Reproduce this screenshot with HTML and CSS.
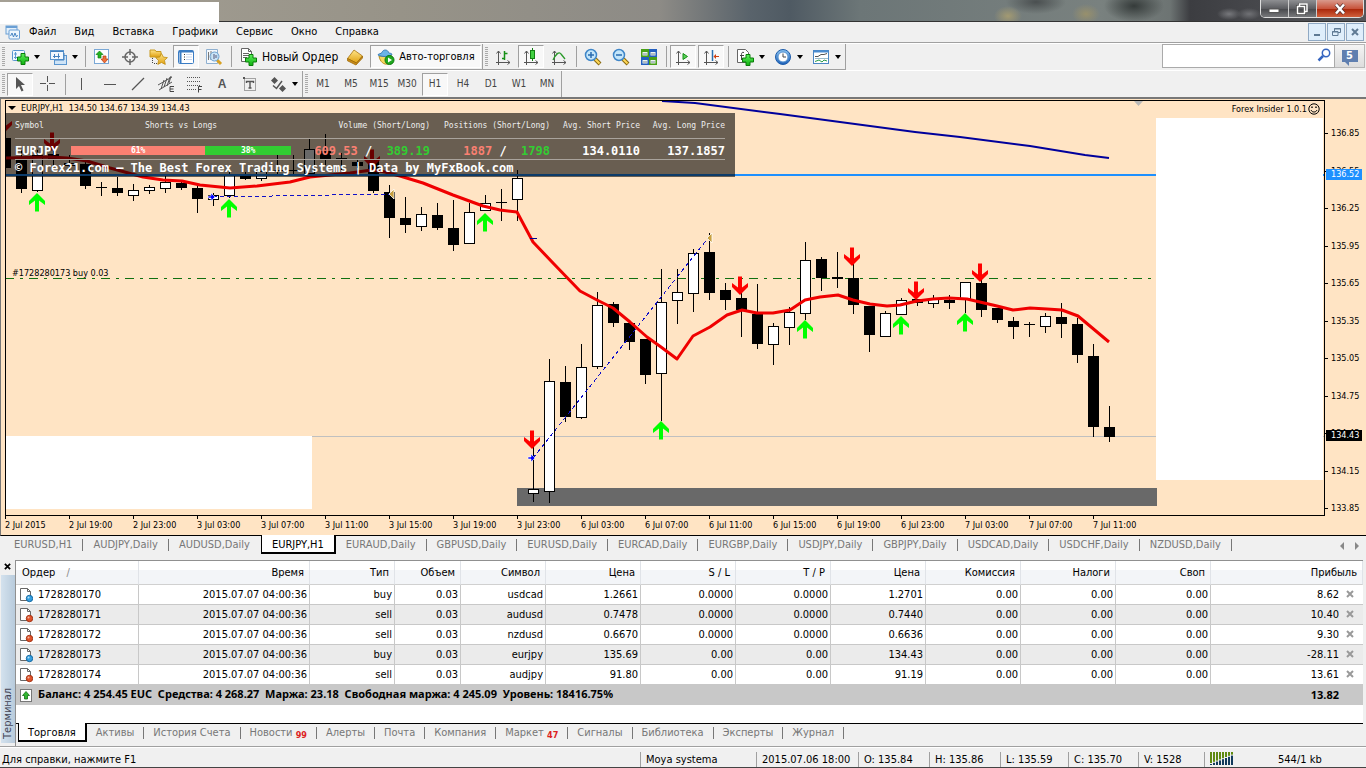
FILE: index.html
```html
<!DOCTYPE html>
<html lang="ru">
<head>
<meta charset="utf-8">
<title>EURJPY,H1</title>
<link rel="stylesheet" href="styles.css">
</head>
<body>
<svg class="defs" aria-hidden="true">
  <defs>
    <linearGradient id="plusFill" x1="0" y1="0" x2="0" y2="1"><stop offset="0" stop-color="#5cf05c"/><stop offset="1" stop-color="#10b010"/></linearGradient>
    <linearGradient id="goldFill" x1="0" y1="0" x2="0" y2="1"><stop offset="0" stop-color="#ffe68a"/><stop offset="1" stop-color="#e0a010"/></linearGradient>
    <linearGradient id="blueFill" x1="0" y1="0" x2="0" y2="1"><stop offset="0" stop-color="#8cc4f0"/><stop offset="1" stop-color="#1c60b8"/></linearGradient>
    <symbol id="plus" viewBox="0 0 12 12"><path d="M4 .5h4V4h3.500v4H8v3.500H4V8H.5V4H4z" fill="url(#plusFill)" stroke="#0a7d0a"/></symbol>
    <symbol id="axes" viewBox="0 0 18 18"><path d="M4.500 3v14M2 14.500h14M2.500 5.500l2-2.500 2 2.500M13.500 12.500l2.500 2-2.500 2" fill="none" stroke="#555"/></symbol>
    <symbol id="lens" viewBox="0 0 18 18"><path d="M11 11l5 5" stroke="#8a6a10" stroke-width="4"/><path d="M11 11l4.500 4.500" stroke="#ffd95a" stroke-width="2"/><circle cx="7" cy="7" r="5.500" fill="#c4e6fa" stroke="#3f86c8" stroke-width="1.500"/></symbol>
    <symbol id="doc" viewBox="0 0 14 16"><path d="M1.500 1.500h7l3 3v9h-10z" fill="#fff" stroke="#666"/><path d="M8.500 1.500v3h3" fill="none" stroke="#666"/></symbol>
    <symbol id="order-blue" viewBox="0 0 14 16"><use href="#doc"/><circle cx="10.500" cy="11.500" r="3.200" fill="#35a0e0" stroke="#1467a0"/><circle cx="9.500" cy="10.500" r="1" fill="#b5e2fa"/></symbol>
    <symbol id="order-red" viewBox="0 0 14 16"><use href="#doc"/><circle cx="10.500" cy="11.500" r="3.200" fill="#e0532a" stroke="#a33010"/><circle cx="9.500" cy="10.500" r="1" fill="#f8b8a0"/></symbol>
    <symbol id="cross" viewBox="0 0 8 8"><path d="M1 1l6 6M7 1L1 7" stroke="currentColor" stroke-width="2"/></symbol>
  </defs>
</svg>

<div class="app">
  <header class="titlebar">
    <div class="title-blank"></div>
    <div class="win-controls">
      <button class="win-btn" aria-label="Свернуть"><svg width="12" height="12" viewBox="0 0 12 12"><rect x="1" y="6" width="10" height="3.500" fill="#fff" stroke="#555"/></svg></button>
      <button class="win-btn" aria-label="Восстановить"><svg width="12" height="12" viewBox="0 0 12 12"><path d="M3.500 3V1h7.500v7.500H9M1.500 3.500h7v7h-7z" fill="none" stroke="#444" stroke-width="3"/><path d="M3.500 3V1h7.500v7.500H9M1.500 3.500h7v7h-7z" fill="none" stroke="#fff" stroke-width="1.500"/></svg></button>
      <button class="win-btn win-close" aria-label="Закрыть"><svg width="12" height="12" viewBox="0 0 12 12"><path d="M2 1.500l8 9M10 1.500l-8 9" stroke="#533" stroke-width="4"/><path d="M2 1.500l8 9M10 1.500l-8 9" stroke="#fff" stroke-width="2.500"/></svg></button>
    </div>
  </header>

  <nav class="menubar">
    <svg class="app-icon" width="15" height="15" viewBox="0 0 15 15"><rect x="1" y="1" width="11" height="8" fill="#e4f0fb" stroke="#6a9fd4"/><path d="M1 2h11" stroke="#6a9fd4" stroke-width="2"/><rect x="4" y="5" width="10.500" height="9" rx="1" fill="#eef6fd" stroke="#6a9fd4"/><path d="M5.500 11l1.500-3 1.500 4 1.500-4 1.500 4 1-2" fill="none" stroke="#4a86c4"/></svg>
    <button class="menu-item">Файл</button><button class="menu-item">Вид</button><button class="menu-item">Вставка</button><button class="menu-item">Графики</button><button class="menu-item">Сервис</button><button class="menu-item">Окно</button><button class="menu-item">Справка</button>
    <div class="mdi">
      <button class="mdi-btn" aria-label="Свернуть график"><svg width="10" height="10" viewBox="0 0 10 10"><path d="M2 8h6" stroke="#5f7a94" stroke-width="2"/></svg></button>
      <button class="mdi-btn" aria-label="Восстановить график"><svg width="10" height="10" viewBox="0 0 10 10"><path d="M3.500 4V1.500h6v4H7M1.500 4.500h5.500v4H1.500zM3 2h6.500M1 5h6" fill="none" stroke="#5f7a94"/></svg></button>
      <button class="mdi-btn" aria-label="Закрыть график"><svg width="10" height="10" viewBox="0 0 10 10"><path d="M2 2l6 6M8 2L2 8" stroke="#5f7a94" stroke-width="2"/></svg></button>
    </div>
  </nav>

  <div class="toolbar-row">
    <div class="toolbar">
      <span class="grip"></span>
      <button class="tool drop" aria-label="Новый график"><svg width="19" height="18" viewBox="0 0 19 18"><rect x="1.500" y="2.500" width="12" height="10" rx="1" fill="#f2f8fe" stroke="#5b96cf"/><path d="M4.500 4v7M3 9.500h8M3 6h3" stroke="#5b96cf" fill="none"/><use href="#plus" x="6" y="5" width="12" height="12"/></svg><i class="caret"></i></button>
      <button class="tool drop" aria-label="Профили"><svg width="19" height="18" viewBox="0 0 19 18"><rect x="5.500" y="7.500" width="12" height="9" fill="#cfe4f7" stroke="#5b96cf"/><rect x="1.500" y="2.500" width="13" height="9" fill="#f2f8fe" stroke="#5b96cf"/><path d="M1.500 3.500h13M6 12h9v-7M4 8.500h7M5.500 6v4M9.500 5.500v5" stroke="#4582c0" fill="none"/></svg><i class="caret"></i></button>
      <span class="sep"></span>
      <button class="tool" aria-label="Обзор рынка"><svg width="18" height="18" viewBox="0 0 18 18"><rect x="1.500" y="1.500" width="14" height="14" fill="#fcfdff" stroke="#7aa8d6"/><path d="M6.500 3l3.500 3.500H8V10H5V6.500H3z" fill="#22b522" stroke="#118011" stroke-width=".7"/><path d="M10 8h3v3h2l-3.500 4L8 11h2z" fill="#f0703a" stroke="#b03c10" stroke-width=".7"/></svg></button>
      <button class="tool" aria-label="Прицел"><svg width="18" height="18" viewBox="0 0 18 18"><circle cx="9" cy="9" r="5" fill="none" stroke="#666" stroke-width="1.500"/><path d="M9 1v6M9 11v6M1 9h6M11 9h6" stroke="#666" stroke-width="1.500"/></svg></button>
      <button class="tool" aria-label="Избранное"><svg width="19" height="18" viewBox="0 0 19 18"><path d="M1 2h5l1 1.500h5V9H1z" fill="url(#goldFill)" stroke="#c89a20"/><path d="M3.500 10v6M5 15.500h3" stroke="#444" stroke-dasharray="1 1"/><path d="M12.500 5.500l1.900 3.600 4 .5-2.900 2.800.8 4-3.800-1.900-3.700 1.900.7-4-2.900-2.800 4.100-.5z" fill="url(#goldFill)" stroke="#c08d10" stroke-width=".8"/></svg></button>
      <button class="tool pressed" aria-label="Навигатор"><svg width="18" height="18" viewBox="0 0 18 18"><rect x="1.500" y="2.500" width="15" height="13" rx="1" fill="#fff" stroke="#3a7cc4"/><path d="M2 3.500h14M3.500 4v11" stroke="#3a7cc4" stroke-width="2"/><path d="M7 6.500h1M7 9h1M7 11.500h1" stroke="#333"/><path d="M9 6.500h6M9 9h6M9 11.500h6" stroke="#c8d6ee"/></svg></button>
      <button class="tool" aria-label="Окно данных"><svg width="19" height="18" viewBox="0 0 19 18"><path d="M1.500 1.500h11v14h-11z" fill="#f4f8fc" stroke="#8fb0d0"/><path d="M3.500 4v8M6 3v9" stroke="#777"/><path d="M12 12l4 4" stroke="#d8a020" stroke-width="3"/><circle cx="9.500" cy="8.500" r="4.500" fill="#bfe0f6" fill-opacity=".8" stroke="#6a9fcf"/><path d="M9 6v5M11 7v3" stroke="#557"/></svg></button>
      <span class="sep"></span>
      <button class="tool labelled"><svg width="18" height="18" viewBox="0 0 18 18"><path d="M1.500.5h7l3 3v10h-10z" fill="#fff" stroke="#666"/><path d="M8.500.5v3h3M3 5.500h6M3 7.500h6M3 9.500h4" fill="none" stroke="#666"/><use href="#plus" x="5" y="6" width="12" height="12"/></svg>Новый Ордер</button>
      <button class="tool" aria-label="MetaEditor"><svg width="18" height="18" viewBox="0 0 18 18"><path d="M1.500 10.500L8 2l8.500 6-6 7z" fill="url(#goldFill)" stroke="#a87410" stroke-width=".8"/><path d="M1.500 10.500v2.300l8.500 4.200 6.500-7V8l-6 7z" fill="#c88a18" stroke="#a06c08" stroke-width=".8"/></svg></button>
      <button class="tool auto pressed"><svg width="18" height="18" viewBox="0 0 18 18"><path d="M2 8c1 6 5 9 9 8l4-8z" fill="#f6d860" stroke="#b89020"/><path d="M1 7c3 2 11 2 14-.5 0-1.500-3-1-3.500-2C11 1.500 6 1 5 4.500 4 6 1 5.500 1 7z" fill="#6bb4e6" stroke="#3a7cb4"/><circle cx="12.500" cy="12" r="4.500" fill="#20a820" stroke="#0a7a0a"/><path d="M11 9.500v5l4-2.500z" fill="#fff"/></svg>Авто-торговля</button>
    </div>
    <div class="toolbar">
      <span class="grip"></span>
      <button class="tool" aria-label="Бары"><svg width="18" height="18" viewBox="0 0 18 18"><use href="#axes"/><path d="M10.500 3v9M10.500 5.500h3M8 10.500h3" stroke="#169016" stroke-width="1.500"/></svg></button>
      <button class="tool pressed" aria-label="Свечи"><svg width="18" height="18" viewBox="0 0 18 18"><use href="#axes"/><path d="M10.500 0v13" stroke="#118011"/><rect x="8.500" y="2.500" width="4" height="8" fill="#40d040" stroke="#118011"/></svg></button>
      <button class="tool" aria-label="Линия"><svg width="18" height="18" viewBox="0 0 18 18"><use href="#axes"/><path d="M3 12c3-6 6-9 8-6l4 5" fill="none" stroke="#2a9a2a" stroke-width="1.300"/></svg></button>
      <span class="sep"></span>
      <button class="tool" aria-label="Увеличить"><svg width="18" height="18" viewBox="0 0 18 18"><use href="#lens"/><path d="M7 4v6M4 7h6" stroke="#2a6cb0" stroke-width="1.500"/></svg></button>
      <button class="tool" aria-label="Уменьшить"><svg width="18" height="18" viewBox="0 0 18 18"><use href="#lens"/><path d="M4 7h6" stroke="#2a6cb0" stroke-width="1.500"/></svg></button>
      <button class="tool" aria-label="Плитка"><svg width="18" height="18" viewBox="0 0 18 18"><path d="M1 1h8v8H1zM9 9h8v8H9z" fill="#49a018"/><path d="M9 1h8v8H9zM1 9h8v8H1z" fill="#2460c0"/><path d="M2.500 4h5v3.500h-5zM10.500 4h5v3.500h-5zM2.500 12h5v3.500h-5zM10.500 12h5v3.500h-5z" fill="#eef6f0"/><path d="M3 6h4M11 6h4M3 14h4M11 14h4" stroke="#789"/></svg></button>
      <span class="sep"></span>
      <button class="tool pressed" aria-label="Автопрокрутка"><svg width="18" height="18" viewBox="0 0 18 18"><use href="#axes"/><path d="M9 5.500v6l4.500-3z" fill="#58d058" stroke="#169016"/></svg></button>
      <button class="tool pressed" aria-label="Сдвиг графика"><svg width="18" height="18" viewBox="0 0 18 18"><use href="#axes"/><path d="M10.500 2v11" stroke="#2a70b0" stroke-width="1.500"/><path d="M11.500 8.500L14 6v5z" fill="#d04010"/><path d="M13 8.500h4" stroke="#d04010"/></svg></button>
      <span class="sep"></span>
      <button class="tool drop" aria-label="Индикаторы"><svg width="19" height="18" viewBox="0 0 19 18"><path d="M1.500 1.500h8l3 3v10h-11z" fill="#fff" stroke="#666"/><path d="M8 4.500c-2-.7-2.500.5-2.500 2V12M4 7.500h4" fill="none" stroke="#444"/><use href="#plus" x="6" y="6" width="12" height="12"/></svg><i class="caret"></i></button>
      <button class="tool drop" aria-label="Периоды"><svg width="19" height="18" viewBox="0 0 19 18"><circle cx="9" cy="9" r="7.500" fill="url(#blueFill)" stroke="#1d5cab"/><circle cx="9" cy="9" r="5" fill="#fff" stroke="#5a94d0"/><path d="M9 5.500V9h3" fill="none" stroke="#444"/></svg><i class="caret"></i></button>
      <button class="tool drop" aria-label="Шаблоны"><svg width="19" height="18" viewBox="0 0 19 18"><rect x="1.500" y="2.500" width="15" height="13" fill="#fff" stroke="#4a86c4"/><path d="M2 3.500h14" stroke="#4a8cd0" stroke-width="2"/><path d="M3 8.500h3l3-2h3l3-1" fill="none" stroke="#555"/><path d="M3 10.500h13" stroke="#9bc"/><path d="M3 13.500l4-1.500 3 2 2-2 3 1" fill="none" stroke="#2a9a4a"/></svg><i class="caret"></i></button>
    </div>
    <div class="search">
      <input class="search-box" type="search" aria-label="Поиск">
      <svg class="search-icon" width="14" height="14" viewBox="0 0 14 14"><circle cx="9" cy="5" r="3.700" fill="#fff" stroke="#3565c0" stroke-width="1.500"/><path d="M6 8l-4.500 4.500" stroke="#3565c0" stroke-width="2.500"/></svg>
      <button class="chat" aria-label="Сообщения"><span class="bubble">5</span></button>
    </div>
  </div>

  <div class="toolbar-row second">
    <div class="toolbar">
      <span class="grip"></span>
      <button class="tool pressed" aria-label="Курсор"><svg width="18" height="18" viewBox="0 0 18 18"><path d="M5 2v12l3-3 2.500 5.500 2-1L10 10h4z" fill="#555"/></svg></button>
      <button class="tool" aria-label="Перекрестие"><svg width="18" height="18" viewBox="0 0 18 18"><path d="M8.500 1v6M8.500 10v6M1 8.500h6M10 8.500h6" stroke="#555"/></svg></button>
      <span class="sep"></span>
      <button class="tool" aria-label="Вертикальная линия"><svg width="18" height="18" viewBox="0 0 18 18"><path d="M8.500 3v12" stroke="#555"/></svg></button>
      <button class="tool" aria-label="Горизонтальная линия"><svg width="18" height="18" viewBox="0 0 18 18"><path d="M3 9.500h12" stroke="#555"/></svg></button>
      <button class="tool" aria-label="Трендовая линия"><svg width="18" height="18" viewBox="0 0 18 18"><path d="M3 15L15 3" stroke="#555" stroke-width="1.200"/></svg></button>
      <button class="tool" aria-label="Канал"><svg width="18" height="18" viewBox="0 0 18 18"><path d="M1 10L15 2M2 15l13-8M4 14l3-9M7 12l3-9M10 11l3-9M12 8l2-7" stroke="#555"/><path d="M17 11.500h-4v5h4M13 14h3.500" fill="none" stroke="#444"/></svg></button>
      <button class="tool" aria-label="Фибоначчи"><svg width="18" height="18" viewBox="0 0 18 18"><path d="M2 2.500h14M2 6.500h14M2 10.500h14M2 14.500h9" stroke="#555" stroke-dasharray="1 1"/><path d="M17 11.500h-3.500v6M13.500 14.500h3" fill="none" stroke="#444"/></svg></button>
      <button class="tool letter" aria-label="Текст">A</button>
      <button class="tool" aria-label="Метка"><svg width="18" height="18" viewBox="0 0 18 18"><rect x="3.500" y="3.500" width="11" height="12" fill="none" stroke="#555" stroke-dasharray="1 1"/><path d="M2 2h2v2H2z" fill="#555"/><path d="M5.500 8V6.500h7V8M9 6.500v7M7.500 13h3" fill="none" stroke="#555" stroke-width="1.400"/></svg></button>
      <button class="tool drop" aria-label="Стрелки"><svg width="19" height="18" viewBox="0 0 19 18"><path d="M5.500 2L9 5.500 5.500 9 2 5.500zM13.500 10l3.500 3.500-3.500 3.500-3.500-3.500z" fill="#555"/><path d="M4 10.500l3.500 3L13 6" fill="none" stroke="#555" stroke-width="1.500"/></svg><i class="caret"></i></button>
    </div>
    <div class="toolbar">
      <span class="grip"></span>
      <button class="tool period">M1</button><button class="tool period">M5</button><button class="tool period">M15</button><button class="tool period">M30</button><button class="tool period pressed">H1</button><button class="tool period">H4</button><button class="tool period">D1</button><button class="tool period">W1</button><button class="tool period">MN</button>
    </div>
  </div>

  <main class="chart">
    <div class="plot">
      <svg class="plot-svg" id="plot" role="img" aria-label="EURJPY H1"></svg>
      <div class="blank blank-right"></div>
      <div class="blank blank-left"></div>
      <div class="chart-title"><i class="caret"></i><span>EURJPY,H1&nbsp; 134.50 134.67 134.39 134.43</span></div>
      <div class="expert">Forex Insider 1.0.1<svg width="12" height="12" viewBox="0 0 12 12"><circle cx="6" cy="6" r="5.200" fill="none" stroke="#000"/><path d="M3 7c1 2.700 5 2.700 6 0" fill="none" stroke="#000"/><path d="M4 3.500v1.500M8 3.500v1.500" stroke="#000" stroke-width="1.400"/></svg></div>
      <section class="sentiment">
        <div class="s-row s-head"><span>Symbol</span><span class="mid">Shorts vs Longs</span><span>Volume (Short/Long)</span><span>Positions (Short/Long)</span><span>Avg. Short Price</span><span>Avg. Long Price</span></div>
        <div class="s-row s-data"><span>EURJPY</span><span class="ratio"><b class="short-bar">61%</b><b class="long-bar">38%</b></span><span><em class="short">609.53</em> / &nbsp;<em class="long">389.19</em></span><span><em class="short">1887</em> / &nbsp;<em class="long">1798</em></span><span>134.0110</span><span>137.1857</span></div>
        <div class="s-foot">© Forex21.com – The Best Forex Trading Systems | Data by MyFxBook.com</div>
      </section>
    </div>
    <div class="prices">
      <span>136.85</span><span>136.55</span><span>136.25</span><span>135.95</span><span>135.65</span><span>135.35</span><span>135.05</span><span>134.75</span><span>134.45</span><span>134.15</span><span>133.85</span>
      <b class="tag tag-level">136.52</b><b class="tag tag-bid">134.43</b>
    </div>
    <div class="times">
      <span>2 Jul 2015</span><span>2 Jul 19:00</span><span>2 Jul 23:00</span><span>3 Jul 03:00</span><span>3 Jul 07:00</span><span>3 Jul 11:00</span><span>3 Jul 15:00</span><span>3 Jul 19:00</span><span>3 Jul 23:00</span><span>6 Jul 03:00</span><span>6 Jul 07:00</span><span>6 Jul 11:00</span><span>6 Jul 15:00</span><span>6 Jul 19:00</span><span>6 Jul 23:00</span><span>7 Jul 03:00</span><span>7 Jul 07:00</span><span>7 Jul 11:00</span>
    </div>
  </main>

  <div class="tabs chart-tabs">
    <button class="tab">EURUSD,H1</button><button class="tab">AUDJPY,Daily</button><button class="tab last">AUDUSD,Daily</button><button class="tab active">EURJPY,H1</button><button class="tab">EURAUD,Daily</button><button class="tab">GBPUSD,Daily</button><button class="tab">EURUSD,Daily</button><button class="tab">EURCAD,Daily</button><button class="tab">EURGBP,Daily</button><button class="tab">USDJPY,Daily</button><button class="tab">GBPJPY,Daily</button><button class="tab">USDCAD,Daily</button><button class="tab">USDCHF,Daily</button><button class="tab">NZDUSD,Daily</button>
    <div class="tab-arrows"><button class="arrow left" aria-label="Назад"></button><button class="arrow right" aria-label="Вперёд"></button></div>
  </div>

  <section class="terminal">
    <div class="side">
      <button class="side-close" aria-label="Закрыть"><svg width="7" height="7" viewBox="0 0 8 8"><use href="#cross"/></svg></button>
      <div class="side-name">Терминал</div>
    </div>
    <div class="terminal-body">
      <table class="orders">
        <colgroup><col class="c-order"><col class="c-time"><col class="c-type"><col class="c-vol"><col class="c-sym"><col class="c-num"><col class="c-num"><col class="c-num"><col class="c-num"><col class="c-num"><col class="c-num"><col class="c-num"><col></colgroup>
        <thead><tr><th class="first">Ордер <span class="sort">∕</span></th><th>Время</th><th>Тип</th><th>Объем</th><th>Символ</th><th>Цена</th><th>S / L</th><th>T / P</th><th>Цена</th><th>Комиссия</th><th>Налоги</th><th>Своп</th><th>Прибыль</th></tr></thead>
        <tbody>
          <tr><td class="first"><svg width="14" height="16"><use href="#order-blue"/></svg>1728280170</td><td>2015.07.07 04:00:36</td><td>buy</td><td>0.03</td><td>usdcad</td><td>1.2661</td><td>0.0000</td><td>0.0000</td><td>1.2701</td><td>0.00</td><td>0.00</td><td>0.00</td><td>8.62<button class="row-close" aria-label="Закрыть ордер"><svg width="8" height="8"><use href="#cross"/></svg></button></td></tr>
          <tr><td class="first"><svg width="14" height="16"><use href="#order-red"/></svg>1728280171</td><td>2015.07.07 04:00:36</td><td>sell</td><td>0.03</td><td>audusd</td><td>0.7478</td><td>0.0000</td><td>0.0000</td><td>0.7440</td><td>0.00</td><td>0.00</td><td>0.00</td><td>10.40<button class="row-close" aria-label="Закрыть ордер"><svg width="8" height="8"><use href="#cross"/></svg></button></td></tr>
          <tr><td class="first"><svg width="14" height="16"><use href="#order-red"/></svg>1728280172</td><td>2015.07.07 04:00:36</td><td>sell</td><td>0.03</td><td>nzdusd</td><td>0.6670</td><td>0.0000</td><td>0.0000</td><td>0.6636</td><td>0.00</td><td>0.00</td><td>0.00</td><td>9.30<button class="row-close" aria-label="Закрыть ордер"><svg width="8" height="8"><use href="#cross"/></svg></button></td></tr>
          <tr><td class="first"><svg width="14" height="16"><use href="#order-blue"/></svg>1728280173</td><td>2015.07.07 04:00:36</td><td>buy</td><td>0.03</td><td>eurjpy</td><td>135.69</td><td>0.00</td><td>0.00</td><td>134.43</td><td>0.00</td><td>0.00</td><td>0.00</td><td>-28.11<button class="row-close" aria-label="Закрыть ордер"><svg width="8" height="8"><use href="#cross"/></svg></button></td></tr>
          <tr><td class="first"><svg width="14" height="16"><use href="#order-red"/></svg>1728280174</td><td>2015.07.07 04:00:36</td><td>sell</td><td>0.03</td><td>audjpy</td><td>91.80</td><td>0.00</td><td>0.00</td><td>91.19</td><td>0.00</td><td>0.00</td><td>0.00</td><td>13.61<button class="row-close" aria-label="Закрыть ордер"><svg width="8" height="8"><use href="#cross"/></svg></button></td></tr>
        </tbody>
        <tfoot><tr><td class="first" colspan="12"><svg width="14" height="16" viewBox="0 0 14 16"><rect x="1.500" y="2.500" width="11" height="12" fill="#fff" stroke="#777"/><path d="M7 4.500l3.500 4h-2V12h-3V8.500h-2z" fill="#30b830" stroke="#117011" stroke-width=".8"/></svg>Баланс: 4 254.45 EUC&nbsp; Средства: 4 268.27&nbsp; Маржа: 23.18&nbsp; Свободная маржа: 4 245.09&nbsp; Уровень: 18416.75%</td><td class="total">13.82</td></tr></tfoot>
      </table>
      <div class="tabs term-tabs">
        <button class="tab active">Торговля</button><button class="tab">Активы</button><button class="tab">История Счета</button><button class="tab">Новости <sub>99</sub></button><button class="tab">Алерты</button><button class="tab">Почта</button><button class="tab">Компания</button><button class="tab">Маркет <sub>47</sub></button><button class="tab">Сигналы</button><button class="tab">Библиотека</button><button class="tab">Эксперты</button><button class="tab">Журнал</button>
      </div>
    </div>
  </section>

  <footer class="status">
    <span class="hint">Для справки, нажмите F1</span>
    <span class="f-profile">Moya systema</span><span class="f-date">2015.07.06 18:00</span><span class="f-o">O: 135.84</span><span class="f-h">H: 135.86</span><span class="f-l">L: 135.59</span><span class="f-c">C: 135.70</span><span class="f-v">V: 1528</span>
    <span class="f-net"><svg id="signal" width="24" height="13" viewBox="0 0 24 13"></svg><span class="traffic">544/1 kb</span></span>
  </footer>
</div>
<script src="script.js"></script>
</body>
</html>
```

FILE: styles.css
```css
* { box-sizing: border-box; }
body { margin: 0; background: #f0f0f0; color: #000; font: 11px/14px "DejaVu Sans Condensed", "Noto Sans", sans-serif; }
button { margin: 0; padding: 0; border: 0; background: none; color: inherit; font: inherit; }
svg { display: block; flex: none; }
.defs { position: absolute; width: 0; height: 0; }
.app { display: flex; flex-direction: column; min-height: 100vh; border-bottom: 1px solid #444; }

/* window frame */
.titlebar {
  display: flex; align-items: flex-start; justify-content: space-between; height: 22px; border-bottom: 1px solid #333;
  background:
    radial-gradient(ellipse 14px 10px at 1008px 16px, #a39a72, transparent),
    radial-gradient(ellipse 14px 10px at 1086px 14px, #98906c, transparent),
    radial-gradient(ellipse 30px 16px at 1134px 6px, #353b3a, transparent),
    radial-gradient(ellipse 30px 12px at 1036px 2px, #4a4f50, transparent),
    radial-gradient(ellipse 12px 6px at 1229px 14px, #77787c, transparent),
    radial-gradient(ellipse 12px 6px at 1249px 14px, #707175, transparent),
    linear-gradient(90deg, #a5a095, #979388 400px, #8d8b86 660px, #59636b 750px, #4f5a63 790px, #6c7677 860px, #79817f 1100px, #6d7473 1170px, #3c3d41 1190px, #47484c 1260px, #55565a);
}
.title-blank { width: 219px; height: 22px; margin-top: 2px; background: #fff; z-index: 1; }
.win-controls { display: flex; width: 104px; height: 18px; margin-right: 2px; border: 1px solid #ddd; border-top: 0; border-radius: 0 0 5px 5px; overflow: hidden; }
.win-btn { display: flex; flex: 28; align-items: center; justify-content: center; border-right: 1px solid #ccc; background: linear-gradient(#8e8f92, #5c5d61 50%, #46474b 51%, #77787b); }
.win-close { flex: 48; border-right: 0; background: linear-gradient(#d99a8c, #c8543c 50%, #a82408 51%, #d0603c); }

.menubar { display: flex; align-items: center; height: 21px; padding: 0 2px 0 5px; border-bottom: 1px solid #a0a0a0; }
.app-icon { margin-right: 9px; }
.menu-item { margin-right: 18px; }
.mdi { display: flex; gap: 1px; margin-left: auto; }
.mdi-btn { display: flex; align-items: center; justify-content: center; width: 18px; height: 18px; border: 1px solid #8fa9c4; background: #dfeefb; }

/* toolbars */
.toolbar-row { display: flex; align-items: flex-start; height: 27px; border-top: 1px solid #fff; }
.toolbar { display: flex; align-items: center; gap: 2px; height: 26px; padding: 0 1px 0 2px; border-right: 1px solid #a0a0a0; border-bottom: 1px solid #a0a0a0; }
.second .toolbar { border-bottom: 0; }
.grip { width: 3px; height: 20px; background: repeating-linear-gradient(#aaa 0 1px, transparent 1px 2px); }
.tool { display: flex; align-items: center; justify-content: center; width: 26px; height: 23px; }
.pressed { border: 1px solid; border-color: #a0a0a0 #fff #fff #a0a0a0; background: #f8f8f8; }
.drop { width: 36px; gap: 4px; }
.caret { width: 0; height: 0; border: 3px solid transparent; border-top: 4px solid #000; border-bottom: 0; }
.sep { width: 1px; height: 21px; margin: 0 1px 0 2px; background: #a0a0a0; }
.labelled { width: auto; gap: 4px; padding: 0 2px 0 5px; font-size: 12px; }
.auto { gap: 4px; width: 111px; }
.letter { color: #555; font: bold 12px/14px "Liberation Sans", sans-serif; }
.period { color: #444; font-size: 10px; }
.search { position: relative; display: flex; width: 203px; height: 24px; margin: 0 1px 0 auto; }
.search-box { flex: 1; min-width: 0; padding: 0 24px 0 4px; border: 1px solid #aaa; background: #fff; font: inherit; }
.search-icon { position: absolute; top: 4px; right: 34px; }
.chat { width: 30px; border: 1px solid #b8b8b8; border-left: 0; background: linear-gradient(#f4f4f4, #ddd); }
.bubble { position: relative; display: block; width: 16px; margin: 0 auto; background: #5f7fb0; color: #fff; font-weight: bold; line-height: 12px; }
.bubble::after { content: ""; position: absolute; top: 100%; left: 3px; border-top: 4px solid #5f7fb0; border-left: 4px solid transparent; }

/* chart */
.chart { display: grid; flex: 1; grid-template: minmax(416px, 1fr) 19px / minmax(0, 1fr) 41px; padding: 1px 0 0 4px; border: solid #777; border-width: 2px 0 0 1px; border-bottom: 1px solid #000; background: #ffe4c4; font-size: 9px; line-height: 12px; }
.plot { position: relative; overflow: hidden; border: 1px solid #000; }
.plot-svg { position: absolute; inset: 0; width: 100%; height: 100%; }
.plot-svg text { font-size: 9px; }
.blank { position: absolute; background: #fff; }
.blank-right { top: 17px; right: 1px; width: 167px; height: 362px; }
.blank-left { bottom: 6px; left: 0; width: 306px; height: 73px; }
.chart-title { position: absolute; top: 1px; left: 2px; display: flex; align-items: center; gap: 5px; }
.chart-title .caret { border-width: 4px 4px 0; }
.expert { position: absolute; top: 2px; right: 4px; display: flex; align-items: center; gap: 1px; }
.sentiment { position: absolute; top: 12px; left: 0; width: 729px; height: 64px; padding: 0 10px 0 9px; background: rgba(0, 0, 0, .59); color: #fff; font: bold 12px/14px "DejaVu Sans Mono", monospace; }
.s-row { display: grid; grid-template-columns: 56px 220px 139px 120px 90px 85px; align-items: center; border-bottom: 1px solid #a9a39c; text-align: right; }
.s-row span:first-child { text-align: left; }
.s-row .mid { text-align: center; }
.s-head { height: 26px; color: #eee; font-weight: normal; font-size: 8px; }
.s-data { height: 21px; padding-top: 3px; }
.s-foot { line-height: 16px; }
.ratio { display: flex; height: 9px; font-size: 8px; line-height: 9px; text-align: center; }
.short-bar { flex: 61; background: #fa8072; }
.long-bar { flex: 39; background: #32cd32; }
.sentiment em { font-style: normal; }
.short { color: #fa8072; }
.long { color: #32cd32; }
.prices { position: relative; display: flex; flex-direction: column; justify-content: space-between; padding: 27px 0 2px; }
.prices span { position: relative; padding-left: 6px; }
.prices span::before { content: ""; position: absolute; top: 6px; left: 0; width: 3px; height: 1px; background: #000; }
.tag { position: absolute; left: 1px; width: 36px; padding-left: 5px; color: #fff; font-weight: normal; line-height: 11px; }
.tag-level { top: 69px; background: #1e90ff; }
.tag-bid { top: 330px; background: #000; }
.times { display: grid; grid-column: 1 / -1; grid-template-columns: repeat(18, 64px); white-space: nowrap; }
.times span { position: relative; padding-top: 3px; }
.times span::before { content: ""; position: absolute; top: 0; left: 0; width: 1px; height: 3px; background: #000; }

/* tab strips */
.tabs { display: flex; align-items: flex-start; height: 18px; color: #777; white-space: nowrap; }
.tab { position: relative; height: 18px; padding: 0 11px 0 10px; }
.tab::after { content: ""; position: absolute; top: 3px; right: 0; width: 1px; height: 12px; background: #777; }
.tab.active { height: 19px; margin-top: -1px; padding: 2px 10px 0; border: solid #000; border-width: 0 2px 2px 1px; background: #fff; color: #000; }
.tab.active::after, .tab.last::after { display: none; }
.chart-tabs { padding-left: 4px; margin-bottom: 6px; }
.tab sub { color: #d22; font-size: 9px; font-weight: bold; line-height: 9px; vertical-align: -2px; }
.tab-arrows { display: flex; gap: 11px; margin: 6px 7px 0 auto; }
.arrow { border: 4px solid transparent; border-width: 4px 0; }
.arrow.left { border-right: 4px solid #888; }
.arrow.right { border-left: 4px solid #888; }

/* terminal */
.terminal { display: flex; height: 187px; border-bottom: 1px solid #a0a0a0; }
.side { display: flex; flex-direction: column; align-items: center; width: 15px; }
.side-close { padding: 3px 0 5px; }
.side-name { flex: 1; width: 14px; margin-bottom: 3px; padding-top: 4px; background: linear-gradient(90deg, #b8cbdc, #d4e2ee); color: #445; writing-mode: vertical-rl; transform: rotate(180deg); }
.terminal-body { display: flex; flex: 1; flex-direction: column; min-width: 0; margin-right: 3px; border: solid #909090; border-width: 1px 0 0 1px; background: #fff; }
.orders { width: 100%; border-collapse: separate; border-spacing: 0; table-layout: fixed; text-align: right; white-space: nowrap; }
.c-order { width: 123px; }
.c-time { width: 171px; }
.c-type, .c-sym { width: 85px; }
.c-vol { width: 66px; }
.c-num { width: 95px; }
.orders th { height: 24px; padding: 0 5px; border-right: 1px solid #e0e3e8; border-bottom: 1px solid #d0d0d0; background: linear-gradient(#fff 40%, #f3f5f8 41%); font-weight: normal; }
.orders td { height: 20px; padding: 0 2px; border: solid #c8c8c8; border-width: 0 1px 1px 0; }
.orders tbody tr:nth-child(even) { background: #ebebeb; }
.orders .first { padding-left: 6px; text-align: left; }
.orders td.first svg { display: inline-block; margin: 0 5px 0 -3px; vertical-align: middle; }
.sort { margin-left: 8px; color: #888; }
.orders td:last-child { border-right: 0; }
.row-close { width: 22px; color: #999; text-align: center; }
.row-close svg { display: inline-block; }
.orders tfoot td { border: 0; background: #c8c8c8; font-family: "Noto Sans", sans-serif; font-weight: bold; }
.orders td.total { padding-right: 24px; }
.term-tabs { height: 23px; margin-top: auto; padding-left: 2px; border-top: 1px solid #000; background: #f0f0f0; }
.term-tabs .tab { padding: 0 10px 0 9px; }
.term-tabs .tab.active { padding: 2px 9px 0; }

.status { display: flex; height: 20px; padding: 4px 0 0 2px; border-top: 1px solid #fff; line-height: 16px; }
.status > span { padding-left: 5px; border-left: 1px solid #a0a0a0; white-space: nowrap; }
.status > .hint { flex: 1; padding: 0; border: 0; }
.status .f-profile { width: 116px; }
.status .f-date { width: 102px; }
.status .f-o { width: 71px; }
.status .f-h { width: 71px; }
.status .f-l { width: 68px; }
.status .f-c { width: 70px; }
.status .f-v { width: 66px; }
.status .f-net { display: flex; width: 162px; }
.traffic { flex: 1; padding-left: 44px; }
```

FILE: script.js
```js
const NS = "http://www.w3.org/2000/svg";

function add(parent, tag, attrs, text) {
  const el = document.createElementNS(NS, tag);
  for (const key in attrs) el.setAttribute(key, attrs[key]);
  if (text) el.textContent = text;
  parent.appendChild(el);
  return el;
}

const plot = add(document.getElementById("plot"), "g", { transform: "translate(-6 -101)" });
const crisp = { "shape-rendering": "crispEdges" };

add(plot, "rect", { x: 517, y: 488, width: 640, height: 18, fill: "#696969" });
add(plot, "rect", { x: 5, y: 436, width: 4000, height: 1, fill: "#c0c0c0" });
add(plot, "path", { d: "M5 278.500H1152", stroke: "#107010", "stroke-dasharray": "9 6 3 6", ...crisp });

// [wick top, body top, body bottom, wick bottom, kind]: w = rising, b = falling, x = unchanged
const candles = [
  [120, 138, 168, 181, "b"], [150, 158, 189, 193, "b"], [150, 155, 190, 192, "w"], [150, 154, 160, 168, "b"],
  [155, 163, 165, 172, "w"], [161, 164, 186, 189, "b"], [182, 187, 187, 196, "x"], [177, 188, 193, 196, "b"],
  [184, 190, 195, 201, "w"], [185, 187, 190, 194, "w"], [176, 182, 188, 193, "w"], [180, 183, 188, 190, "b"],
  [184, 188, 199, 213, "b"], [193, 195, 199, 206, "w"], [170, 174, 195, 198, "w"], [172, 176, 179, 180, "b"],
  [169, 171, 178, 181, "w"], [155, 170, 170, 176, "x"], [155, 170, 170, 176, "x"], [139, 149, 173, 175, "w"],
  [134, 151, 159, 165, "b"], [153, 158, 158, 170, "x"], [160, 162, 166, 168, "b"], [158, 160, 191, 193, "b"],
  [185, 192, 218, 238, "b"], [197, 218, 225, 233, "b"], [207, 214, 226, 231, "w"], [203, 215, 228, 230, "b"],
  [200, 228, 245, 251, "b"], [203, 212, 243, 243, "w"], [195, 203, 210, 211, "w"], [189, 202, 202, 221, "x"],
  [170, 178, 199, 221, "w"], [447, 489, 493, 502, "w"], [359, 381, 491, 503, "w"], [366, 382, 417, 422, "b"],
  [344, 367, 417, 419, "w"], [292, 305, 366, 369, "w"], [302, 304, 323, 327, "b"], [323, 323, 342, 350, "b"],
  [339, 339, 375, 384, "b"], [269, 302, 373, 421, "w"], [269, 292, 300, 324, "w"], [249, 253, 293, 312, "w"],
  [233, 252, 293, 300, "b"], [283, 290, 300, 310, "b"], [290, 298, 310, 337, "b"], [284, 314, 344, 349, "b"],
  [323, 326, 344, 365, "w"], [307, 312, 327, 345, "w"], [242, 260, 313, 320, "w"], [257, 259, 278, 291, "b"],
  [252, 277, 279, 288, "b"], [263, 278, 305, 314, "b"], [306, 306, 335, 352, "b"], [311, 313, 336, 336, "w"],
  [298, 300, 314, 315, "w"], [299, 299, 303, 306, "b"], [295, 299, 303, 308, "w"], [295, 300, 303, 309, "b"],
  [282, 282, 299, 313, "w"], [280, 283, 310, 317, "b"], [308, 308, 320, 323, "b"], [317, 321, 327, 339, "b"],
  [322, 324, 324, 337, "x"], [313, 316, 326, 333, "w"], [303, 317, 324, 338, "b"], [318, 324, 355, 363, "b"],
  [344, 356, 427, 437, "b"], [406, 427, 437, 442, "b"]
];
candles.forEach(([high, top, bottom, low, kind], i) => {
  const x = 5 + i * 16;
  add(plot, "rect", { x, y: high, width: 1, height: low - high, fill: "#000" });
  if (kind === "w") add(plot, "rect", { x: x - 4.5, y: top + 0.5, width: 10, height: bottom - top, fill: "#fff", stroke: "#000" });
  else add(plot, "rect", { x: x - 5, y: top, width: 11, height: Math.max(1, bottom - top), fill: "#000" });
});

// open and closed trades
for (const d of ["M213 197L391 194", "M533 458L709 237"]) {
  add(plot, "path", { d, fill: "none", stroke: "#1010c8", "stroke-dasharray": "4 3", ...crisp });
}
for (const [x, y] of [[211, 197], [531, 458]]) {
  add(plot, "path", { d: `M${x - 3} ${y - 1}h3v-3l4 4-4 4v-3h-3z`, fill: "#0000ff", stroke: "#fff", "stroke-width": 0.6 });
}

// moving averages
const average = [5,158, 50,157, 67,158, 87,161, 110,168, 143,177, 163,180, 182,181, 200,185, 230,188, 257,186, 290,182, 310,177,
  350,173, 372,170, 385,172, 400,176, 423,183, 453,195, 483,206, 500,210, 517,212, 533,242, 553,263, 580,291, 597,300, 613,308,
  630,322, 647,337, 661,347, 677,359, 693,336, 710,327, 727,315, 742,310, 757,313, 773,313, 790,310, 805,300, 820,297, 838,295,
  853,300, 870,304, 887,306, 900,305, 917,301, 933,299, 949,298, 967,299, 997,306, 1013,310, 1030,308, 1047,309, 1062,310, 1078,316, 1109,342];
add(plot, "polyline", { points: average, fill: "none", stroke: "#f00000", "stroke-width": 3, "stroke-linejoin": "round" });
add(plot, "polyline", { points: "662,101 695,103 780,114 915,132 960,137 1030,146 1085,155 1109,158", fill: "none", stroke: "#00009c", "stroke-width": 2 });
add(plot, "path", { d: "M530 238.500h7", stroke: "#000090" });
for (const [x, y] of [[391, 194], [709, 238]]) {
  add(plot, "path", { d: `M${x - 2} ${y}l5-5v10z`, fill: "#c8a040", stroke: "#fff", "stroke-width": 0.8 });
}

// signal arrows, placed by centre and top edge
for (const [x, y] of [[37, 193], [229, 199], [485, 213], [661, 421], [805, 320], [901, 316], [965, 313]]) {
  add(plot, "path", { d: `M${x} ${y}l8 8v4l-6-4.500v11h-4v-11l-6 4.500v-4z`, fill: "#00ff00" });
}
for (const [x, y] of [[4, 114], [52, 132], [372, 149], [532, 430], [740, 276], [852, 247], [916, 281], [980, 263]]) {
  add(plot, "path", { d: `M${x} ${y + 19}l8-8v-4l-6 4.500v-11h-4v11l-6-4.500v4z`, fill: "#ff0000" });
}

add(plot, "rect", { x: 5, y: 174, width: 4000, height: 2, fill: "#1e90ff" });
add(plot, "path", { d: "M1134 101h9l-4.500 5z", fill: "#b8b8b8" });
add(plot, "text", { x: 12, y: 276 }, "#1728280173 buy 0.03");

// connection bars
const signal = document.getElementById("signal");
for (let i = 0; i < 8; i++) {
  const h = 11 - i * 1.2;
  add(signal, "rect", { x: i * 3, y: 0, width: 2, height: h, fill: "#5f8a10" });
  add(signal, "rect", { x: i * 3, y: h + 1, width: 2, height: 12 - h, fill: "#123a5c" });
}
```
